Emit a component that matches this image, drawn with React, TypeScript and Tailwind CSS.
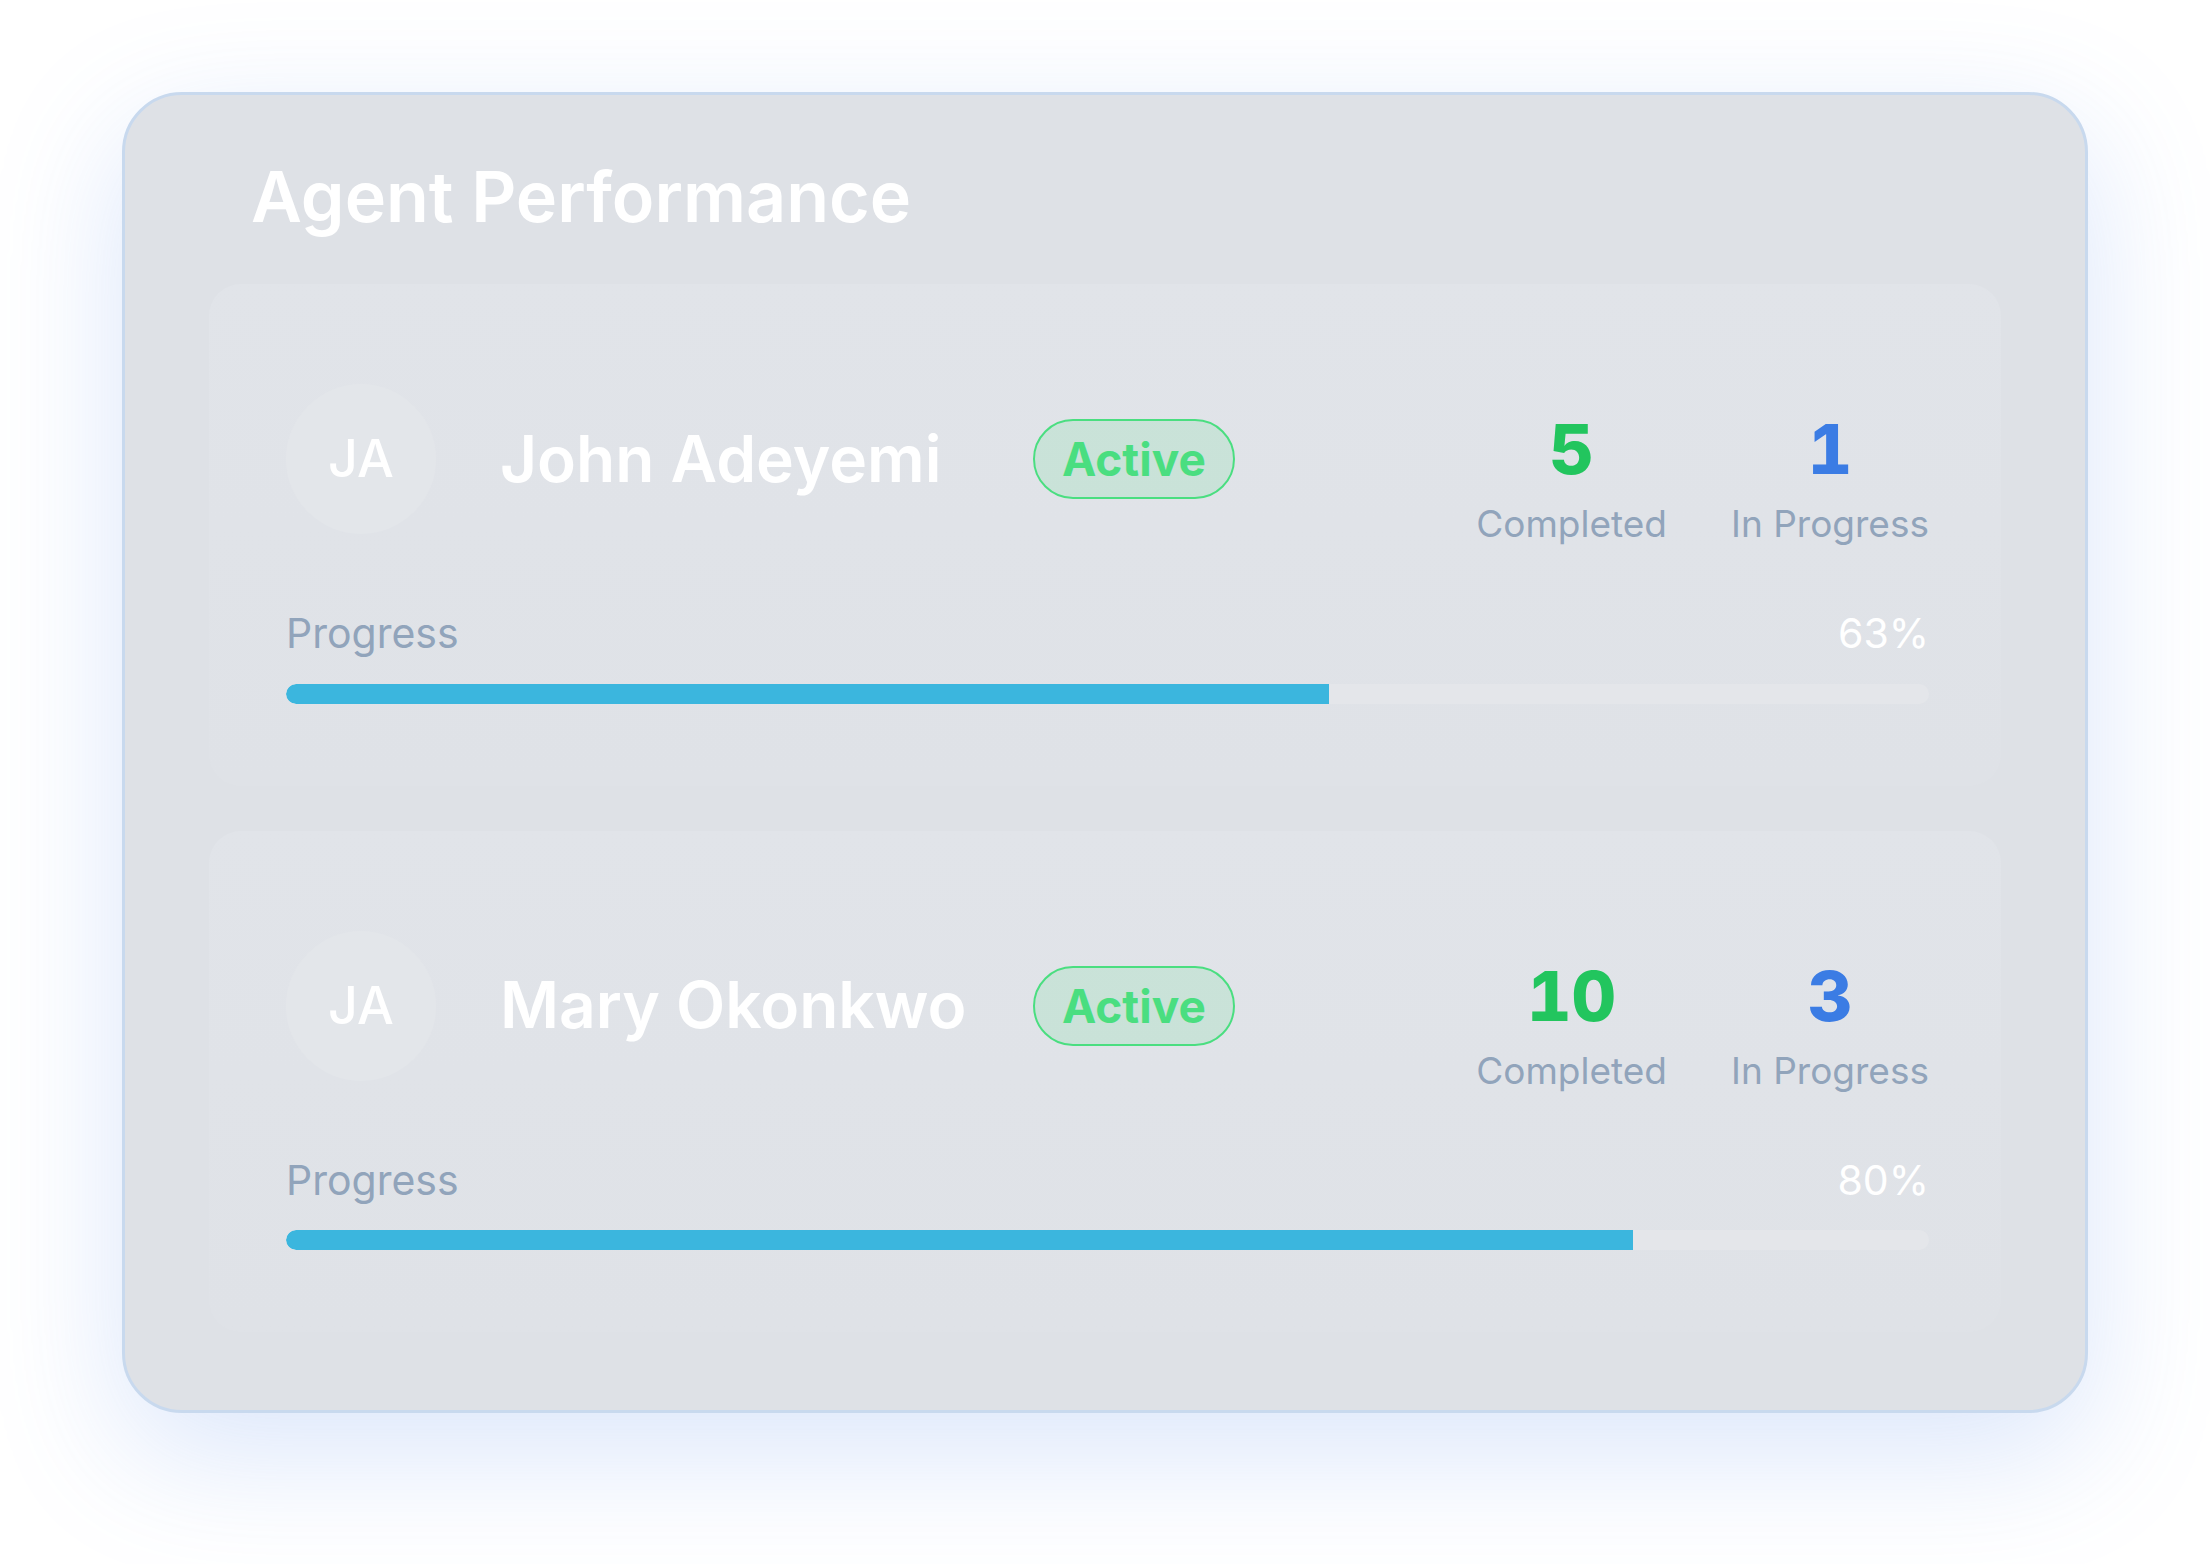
const agents = [
  { initials: 'JA', name: 'John Adeyemi', status: 'Active', completed: 5, inProgress: 1, progress: 63, bar: 63.5 },
  { initials: 'JA', name: 'Mary Okonkwo', status: 'Active', completed: 10, inProgress: 3, progress: 80, bar: 82 },
]

function AgentCard({ agent }: { agent: (typeof agents)[number] }) {
  return (
    <div className="rounded-[32px] bg-gradient-to-b from-[#e1e4e9] to-[#dfe2e7] pt-[100px] pb-[82px] pl-[77px] pr-[72px]">
      <div className="flex items-start">
        <div className="flex items-center">
          <div className="w-[150px] h-[150px] rounded-full bg-[#e3e6ea] flex items-center justify-center text-white text-[52px] font-medium">
            {agent.initials}
          </div>
          <p className="ml-[64px] w-[533px] text-white text-[64px] font-semibold leading-[1.2]">{agent.name}</p>
          <span className="h-[80px] px-[27px] flex items-center rounded-full border-2 border-[#4ade80] bg-[#4ade80]/15 text-[#4ade80] text-[46px] font-bold leading-none">
            {agent.status}
          </span>
        </div>
        <div className="ml-auto mt-[31px] flex gap-[64px]">
          <div className="flex flex-col items-center">
            <p className="text-[69px] leading-none font-extrabold tabular-nums text-[#22c55e]">{agent.completed}</p>
            <p className="mt-[18px] text-[37px] leading-[1.2] text-[#91a4bb]">Completed</p>
          </div>
          <div className="flex flex-col items-center">
            <p className="text-[69px] leading-none font-extrabold tabular-nums text-[#3b7ce4]">{agent.inProgress}</p>
            <p className="mt-[18px] text-[37px] leading-[1.2] text-[#91a4bb]">In Progress</p>
          </div>
        </div>
      </div>

      <div className="mt-[63px] flex items-center justify-between text-[41px] leading-[1.2]">
        <span className="text-[#91a4bb]">Progress</span>
        <span className="text-white">{agent.progress}%</span>
      </div>
      <div className="mt-[25px] h-[20px] rounded-full bg-[#e4e6ea] overflow-hidden">
        <div className="h-full rounded-l-full bg-[#3bb6de]" style={{ width: `${agent.bar}%` }} />
      </div>
    </div>
  )
}

export default function App() {
  return (
    <div className="min-h-screen w-full bg-white pt-[92px] pl-[122px] font-['Inter',sans-serif]">
      <div className="w-[1966px] rounded-[60px] border-[3px] border-[#c8d9ee] bg-[#dee1e6] pt-[60px] pb-[78px] px-[84px] shadow-[0_40px_130px_rgba(90,140,235,0.22)]">
        <h1 className="ml-[42px] text-white text-[70px] font-semibold leading-[1.2]">Agent Performance</h1>
        <div className="mt-[45px] flex flex-col gap-[45px]">
          {agents.map((agent) => (
            <AgentCard key={agent.name} agent={agent} />
          ))}
        </div>
      </div>
    </div>
  )
}
